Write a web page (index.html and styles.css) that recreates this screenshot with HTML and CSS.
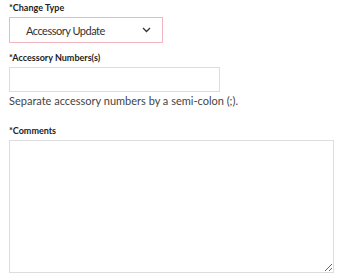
FILE: index.html
```html
<!DOCTYPE html>
<html lang="en">
<head>
    <meta charset="UTF-8">
    <meta name="viewport" content="width=device-width, initial-scale=1.0">
    <title>Change Request</title>
    <link rel="stylesheet" href="styles.css">
</head>
<body>
    <form class="change-form">
        <div class="field">
            <label class="field-label">*Change Type</label>
            <div class="select-box">
                <span class="select-value">Accessory Update</span>
                <svg class="chevron" width="9" height="6" viewBox="0 0 9 6">
                    <path d="M1 1 L4.5 4.5 L8 1" fill="none" stroke="#333" stroke-width="1.3"/>
                </svg>
            </div>
        </div>
        <div class="field">
            <label class="field-label">*Accessory Numbers(s)</label>
            <input class="text-input" type="text">
            <p class="help">Separate accessory numbers by a semi-colon (;).</p>
        </div>
        <div class="field">
            <label class="field-label">*Comments</label>
            <textarea class="comments"></textarea>
        </div>
    </form>
</body>
</html>
```

FILE: styles.css
```css
body {
    font-family: Lato, Arial, sans-serif;
    background-color: #fff;
    color: #333;
    margin: 0;
    padding: 0 6px 0 9px;
}

.change-form {
    display: flex;
    flex-direction: column;
    padding-top: 1px;
}

.field {
    display: flex;
    flex-direction: column;
    align-items: flex-start;
    margin-bottom: 8px;
}

.field-label {
    font-size: 9px;
    font-weight: bold;
    color: #222;
    line-height: 13px;
    margin-bottom: 3px;
}

.select-box {
    box-sizing: border-box;
    width: 154px;
    height: 26px;
    border: 1.5px solid #f2b6bf;
    display: flex;
    align-items: center;
    justify-content: space-between;
    padding: 0 11px 0 16px;
    font-size: 11px;
    letter-spacing: -0.5px;
    color: #333;
}

.chevron {
    display: block;
}

.text-input {
    box-sizing: border-box;
    width: 211px;
    height: 25px;
    border: 1px solid #ddd;
    margin: 0;
    padding: 0 8px;
}

.help {
    font-size: 11px;
    color: #444;
    margin: 0 0 7px;
    line-height: 17px;
}

.comments {
    box-sizing: border-box;
    width: 325px;
    height: 133px;
    border: 1px solid #ddd;
    margin: 0;
    resize: both;
}
```
